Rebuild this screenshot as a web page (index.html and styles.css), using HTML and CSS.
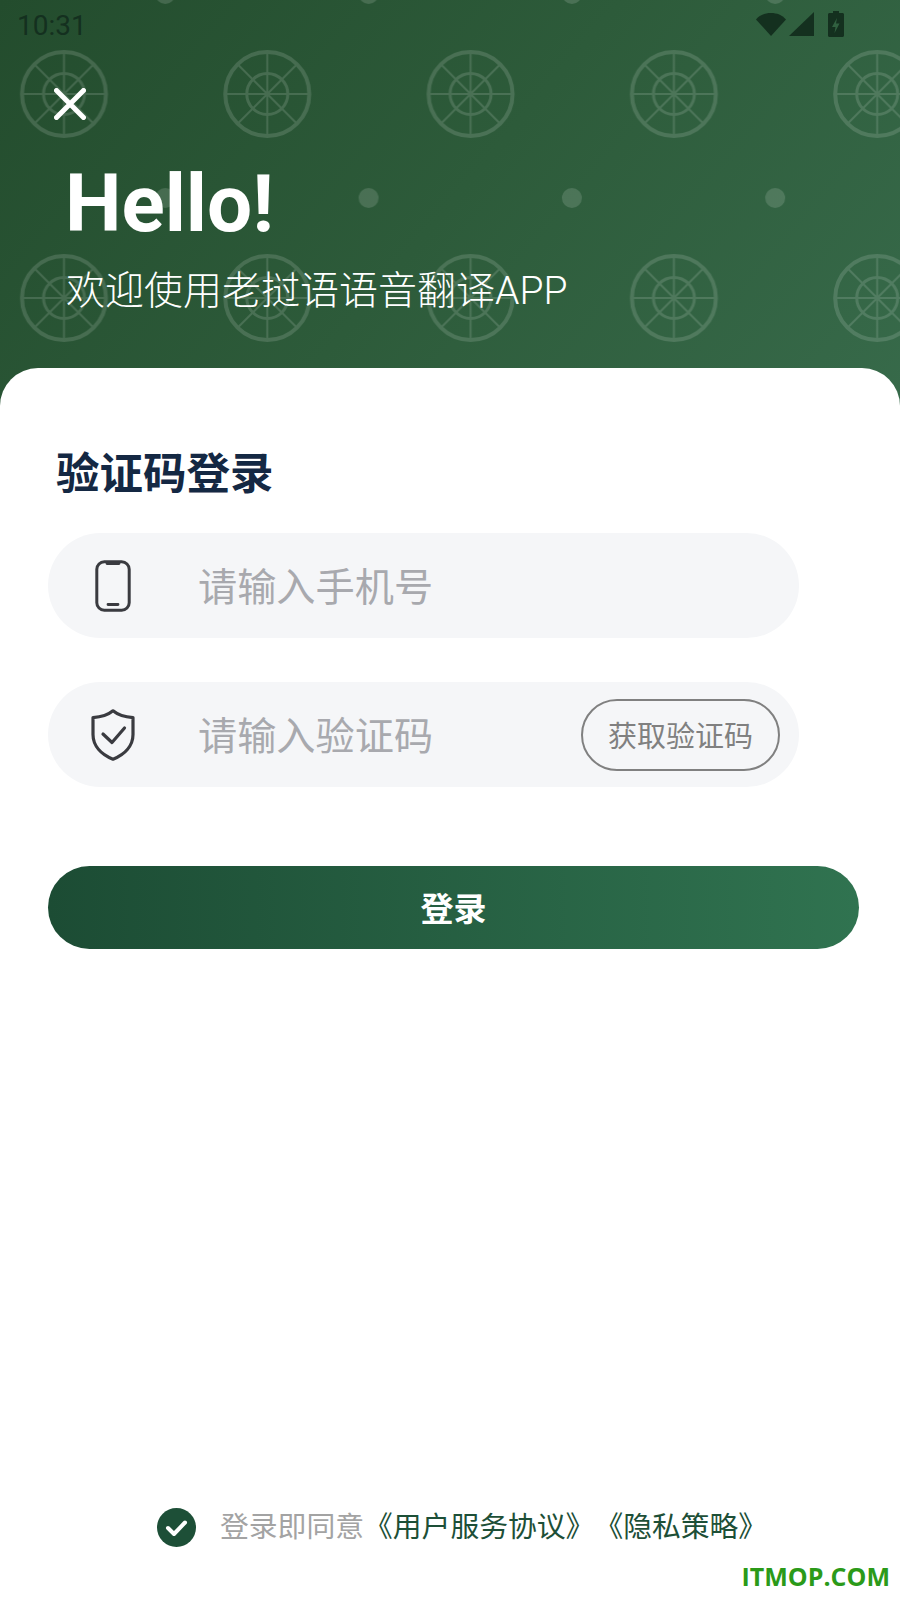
FILE: index.html
```html
<!DOCTYPE html>
<html lang="zh-CN">
<head>
  <meta charset="UTF-8">
  <meta name="viewport" content="width=device-width, initial-scale=1.0">
  <title>验证码登录</title>
  <link rel="stylesheet" href="styles.css">
</head>
<body>
  <div class="page">
    <div class="hero">
      <!-- wheel and dot pattern behind the header -->
      <svg class="hero-pattern" width="900" height="420" aria-hidden="true">
        <defs>
          <pattern id="wheels" width="203.3" height="204" patternUnits="userSpaceOnUse" patternTransform="translate(-38 -8)">
            <g fill="none" stroke="#fff">
              <circle cx="102" cy="102" r="42" stroke-width="4"/>
              <circle cx="102" cy="102" r="20.5" stroke-width="3"/>
              <path stroke-width="2" d="M102 60v84M60 102h84M72.300 72.300l59.400 59.400M131.700 72.300l-59.400 59.400"/>
            </g>
            <circle cx="0" cy="2" r="10" fill="#fff"/>
            <circle cx="203.300" cy="2" r="10" fill="#fff"/>
            <circle cx="0" cy="206" r="10" fill="#fff"/>
            <circle cx="203.300" cy="206" r="10" fill="#fff"/>
          </pattern>
        </defs>
        <rect width="900" height="420" fill="url(#wheels)" opacity="0.14"/>
      </svg>

      <div class="status-bar">
        <span class="time">10:31</span>
        <div class="status-icons">
          <svg width="30" height="24" viewBox="0 0 30 24"><path d="M0 7.500C4 3 9 1 15 1s11 2 15 6.500L15 24z"/></svg>
          <svg width="25" height="24" viewBox="0 0 25 24"><path d="M25 0v24H0z"/></svg>
          <svg class="battery" width="16" height="26" viewBox="0 0 16 26"><path fill-rule="evenodd" d="M5 0h6v2h3.500c.8 0 1.500.7 1.500 1.500V24.500c0 .8-.7 1.500-1.500 1.500h-13C.7 26 0 25.300 0 24.500V3.500C0 2.700.7 2 1.500 2H5zM9 7l-5 9h3.500L6.500 22l5-9.500H8z"/></svg>
        </div>
      </div>

      <div class="close">
        <svg width="32" height="32" viewBox="0 0 32 32"><path d="M2.500 2.500l27 27M29.500 2.500l-27 27" stroke="#fff" stroke-width="5" stroke-linecap="round"/></svg>
      </div>

      <h1 class="hello">Hello!</h1>
      <p class="welcome">欢迎使用老挝语语音翻译APP</p>
    </div>

    <div class="card">
      <h2 class="card-title">验证码登录</h2>

      <div class="field">
        <span class="field-icon">
          <svg width="36" height="52" viewBox="0 0 36 52" fill="none" stroke="#3a3b40">
            <rect x="1.800" y="1.800" width="32.400" height="48.400" rx="7.500" stroke-width="3"/>
            <path d="M12 3.500h12M13 44.500h10" stroke-width="2.800" stroke-linecap="round"/>
          </svg>
        </span>
        <span class="placeholder">请输入手机号</span>
      </div>

      <div class="field">
        <span class="field-icon">
          <svg width="44" height="52" viewBox="0 0 44 52" fill="none" stroke="#3a3b40" stroke-width="3.200" stroke-linejoin="round" stroke-linecap="round">
            <path d="M22 1.800c5 4.200 11.500 6.200 20 6.800v16.900c0 11-8 19.800-20 24.700C10 45.300 2 36.500 2 25.500V8.600c8.500-.6 15-2.600 20-6.800z"/>
            <path d="M12 25l9 8.500L33.500 19"/>
          </svg>
        </span>
        <span class="placeholder">请输入验证码</span>
        <div class="code-btn">获取验证码</div>
      </div>

      <div class="login-btn">登录</div>

      <div class="agreement">
        <svg class="agree-check" width="39" height="39" viewBox="0 0 39 39">
          <circle cx="19.500" cy="19.500" r="19.500" fill="#1d4f37"/>
          <path d="M11 20l6 6 11-11.500" fill="none" stroke="#fff" stroke-width="4" stroke-linecap="round" stroke-linejoin="round"/>
        </svg>
        <span class="agree-text">登录即同意<a class="agree-link">《用户服务协议》《隐私策略》</a></span>
      </div>
    </div>

    <div class="watermark">ITMOP.COM</div>
  </div>
</body>
</html>
```

FILE: styles.css
```css
body {
  margin: 0;
  font-family: Roboto, "Noto Sans CJK SC", sans-serif;
  background-color: #fff;
}
.page {
  position: relative;
  height: 1600px;
  display: flex;
  flex-direction: column;
  overflow: hidden;
}
.hero {
  position: relative;
  height: 410px;
  padding-left: 66px;
  box-sizing: border-box;
  background: linear-gradient(130deg, #234c2d 0%, #2d5b3a 50%, #376a4a 100%);
  color: #fff;
}
.hero-pattern {
  position: absolute;
  top: 0;
  left: 0;
}
.status-bar {
  position: relative;
  height: 48px;
  margin-left: -49px;
  padding-right: 56px;
  display: flex;
  justify-content: space-between;
  align-items: center;
  color: #14301f;
}
.time {
  font-size: 28px;
  padding-top: 2px;
}
.status-icons {
  display: flex;
  align-items: center;
  gap: 3px;
}
.status-icons svg {
  fill: #14301f;
}
.status-icons .battery {
  margin-left: 11px;
}
.close {
  position: relative;
  height: 32px;
  margin: 40px 0 0 -12px;
}
.hello {
  position: relative;
  margin: 39px 0 0 -1px;
  font-size: 80px;
  line-height: 90px;
  font-weight: 700;
}
.welcome {
  position: relative;
  margin: 17px 0 0;
  font-size: 39px;
  line-height: 50px;
  font-weight: 300;
}
.card {
  flex: 1;
  display: flex;
  flex-direction: column;
  margin-top: -42px;
  padding: 0 41px 0 48px;
  border-radius: 38px 38px 0 0;
  background-color: #fff;
  position: relative;
}
.card-title {
  margin: 77px 0 0 8px;
  font-size: 43.500px;
  line-height: 60px;
  font-weight: 700;
  color: #142843;
}
.field {
  display: flex;
  align-items: center;
  width: 751px;
  height: 105px;
  margin-top: 44px;
  border-radius: 53px;
  background-color: #f5f6f8;
}
.card-title + .field {
  margin-top: 28px;
}
.field-icon {
  width: 44px;
  margin-left: 43px;
  display: flex;
  justify-content: center;
}
.field-icon svg {
  display: block;
}
.placeholder {
  margin-left: 63px;
  padding-bottom: 4px;
  font-size: 39.200px;
  color: #a8a9ae;
}
.code-btn {
  margin-left: auto;
  margin-right: 19px;
  width: 199px;
  height: 72px;
  box-sizing: border-box;
  border: 2px solid #808080;
  border-radius: 36px;
  font-size: 29px;
  line-height: 72px;
  text-align: center;
  color: #808080;
}
.login-btn {
  height: 83px;
  margin-top: 79px;
  border-radius: 42px;
  background: linear-gradient(90deg, #1c4c34 0%, #307350 100%);
  font-size: 33px;
  font-weight: 700;
  line-height: 87px;
  text-align: center;
  color: #fff;
}
.agreement {
  margin-top: auto;
  margin-bottom: 53px;
  margin-left: 109px;
  display: flex;
  align-items: center;
  gap: 24px;
}
.agree-text {
  font-size: 28.800px;
  line-height: 40px;
  color: #a3a3a3;
  text-spacing-trim: space-all;
}
.agree-link {
  color: #1d4f37;
}
.watermark {
  position: absolute;
  right: 10px;
  bottom: 7px;
  font-family: "Open Sans", sans-serif;
  font-size: 25px;
  font-weight: 700;
  color: #2b9a19;
}
```
